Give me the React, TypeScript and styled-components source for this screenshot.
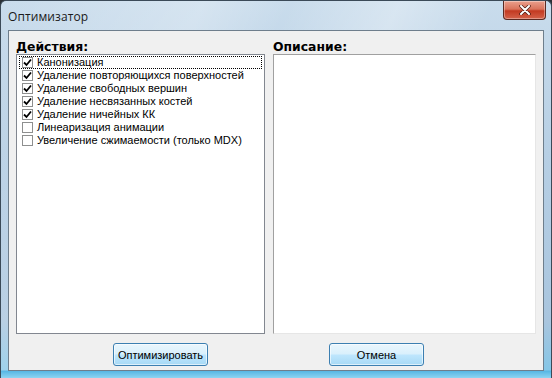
import React from "react";
import styled, { createGlobalStyle } from "styled-components";

const GlobalStyle = createGlobalStyle`
  html, body {
    margin: 0;
    padding: 0;
    background: #2a2f35;
  }
  body {
    font-family: "Liberation Sans", Arial, sans-serif;
  }
`;

const actions = [
  { label: "Канонизация", checked: true },
  { label: "Удаление повторяющихся поверхностей", checked: true },
  { label: "Удаление свободных вершин", checked: true },
  { label: "Удаление несвязанных костей", checked: true },
  { label: "Удаление ничейных КК", checked: true },
  { label: "Линеаризация анимации", checked: false },
  { label: "Увеличение сжимаемости (только MDX)", checked: false },
];

const Window = styled.div`
  width: 552px;
  height: 378px;
  box-sizing: border-box;
  display: flex;
  flex-direction: column;
  border: 1px solid #3b4a58;
  border-bottom: none;
  border-radius: 6px 6px 0 0;
  background: linear-gradient(
      115deg,
      rgba(255, 255, 255, 0) 0%,
      rgba(255, 255, 255, 0.25) 28%,
      rgba(255, 255, 255, 0) 40%,
      rgba(255, 255, 255, 0.3) 55%,
      rgba(255, 255, 255, 0) 68%
    ),
    linear-gradient(180deg, #c9dcec 0%, #b7cfe4 40%, #a9c5de 85%, #7fc6e8 100%);
  overflow: hidden;
`;

const TitleBar = styled.div`
  height: 29px;
  display: flex;
  align-items: flex-start;
  justify-content: space-between;
  padding: 0 5px 0 7px;
`;

const Title = styled.span`
  font-family: "Open Sans", "Liberation Sans", sans-serif;
  font-size: 12px;
  color: #1a1a1a;
  margin-top: 7px;
  letter-spacing: 0.1px;
`;

const CloseButton = styled.div`
  width: 43px;
  height: 19px;
  box-sizing: border-box;
  border: 1px solid #5b2a22;
  border-top: none;
  border-radius: 0 0 4px 4px;
  background: linear-gradient(180deg, #eaa08d 0%, #d9735c 45%, #c33a21 55%, #d4624a 100%);
  display: flex;
  align-items: center;
  justify-content: center;
  box-shadow: inset 0 0 0 1px rgba(255, 255, 255, 0.35);
`;

const Frame = styled.div`
  flex: 1;
  display: flex;
  padding: 0 7px 7px 7px;
  background: linear-gradient(180deg, transparent calc(100% - 8px), #55b6e4 calc(100% - 7px), #8dd4f2 100%);
`;

const Client = styled.div`
  flex: 1;
  display: flex;
  flex-direction: column;
  background: #f0f0f0;
  border: 1px solid #6e7e8c;
  box-sizing: border-box;
`;

const Panels = styled.div`
  display: grid;
  grid-template-columns: 249px 263px;
  column-gap: 8px;
  padding: 7px 0 0 7px;
`;

const Column = styled.div`
  display: flex;
  flex-direction: column;
`;

const Heading = styled.div`
  font-family: "DejaVu Sans", Verdana, sans-serif;
  font-weight: bold;
  font-size: 12.4px;
  height: 16px;
  line-height: 17px;
  color: #000;
`;

const Box = styled.div<{ $soft?: boolean }>`
  height: 280px;
  box-sizing: border-box;
  background: #fff;
  border: 1px solid ${(p) => (p.$soft ? "#a0a0a0" : "#828790")};
  ${(p) => p.$soft && "border-right-color: #e6e6e6; border-bottom-color: #e6e6e6;"}
  padding: 1px 2px;
`;

const Row = styled.div<{ $focused?: boolean }>`
  height: 13px;
  display: flex;
  align-items: center;
  gap: 4px;
  padding-left: 3px;
  font-size: 11px;
  color: #000;
  outline: ${(p) => (p.$focused ? "1px dotted #000" : "none")};
  outline-offset: -1px;
`;

const Check = styled.span`
  width: 11px;
  height: 11px;
  box-sizing: border-box;
  border: 1px solid #8e8f8f;
  background: #fff;
  display: flex;
  align-items: center;
  justify-content: center;
  flex: none;
`;

const Label = styled.span`
  white-space: nowrap;
  line-height: 13px;
`;

const Buttons = styled.div`
  display: flex;
  gap: 121px;
  padding: 9px 0 0 104px;
`;

const Button = styled.button`
  width: 95px;
  height: 23px;
  box-sizing: border-box;
  border: 1px solid #3c7fb1;
  border-radius: 3px;
  background: linear-gradient(180deg, #eaf6fd 0%, #d9f0fc 48%, #bee6fd 52%, #a7d9f5 100%);
  box-shadow: inset 0 0 0 1px rgba(255, 255, 255, 0.6);
  font-family: "Liberation Sans", Arial, sans-serif;
  font-size: 11px;
  color: #000;
  padding: 0;
`;

export default function App() {
  return (
    <>
      <GlobalStyle />
      <Window>
        <TitleBar>
          <Title>Оптимизатор</Title>
          <CloseButton>
            <svg width="12" height="10" viewBox="0 0 12 10">
              <path d="M2 1 L10 9 M10 1 L2 9" stroke="#4a1a12" strokeWidth="3.4" strokeLinecap="round" />
              <path d="M2 1 L10 9 M10 1 L2 9" stroke="#ffffff" strokeWidth="2" strokeLinecap="round" />
            </svg>
          </CloseButton>
        </TitleBar>
        <Frame>
          <Client>
            <Panels>
              <Column>
                <Heading>Действия:</Heading>
                <Box>
                  {actions.map((a, i) => (
                    <Row key={a.label} $focused={i === 0}>
                      <Check>
                        {a.checked && (
                          <svg width="9" height="9" viewBox="0 0 9 9">
                            <path d="M1 4.5 L3.5 7 L8 1.5" fill="none" stroke="#000" strokeWidth="1.8" />
                          </svg>
                        )}
                      </Check>
                      <Label>{a.label}</Label>
                    </Row>
                  ))}
                </Box>
              </Column>
              <Column>
                <Heading>Описание:</Heading>
                <Box $soft />
              </Column>
            </Panels>
            <Buttons>
              <Button>Оптимизировать</Button>
              <Button>Отмена</Button>
            </Buttons>
          </Client>
        </Frame>
      </Window>
    </>
  );
}
